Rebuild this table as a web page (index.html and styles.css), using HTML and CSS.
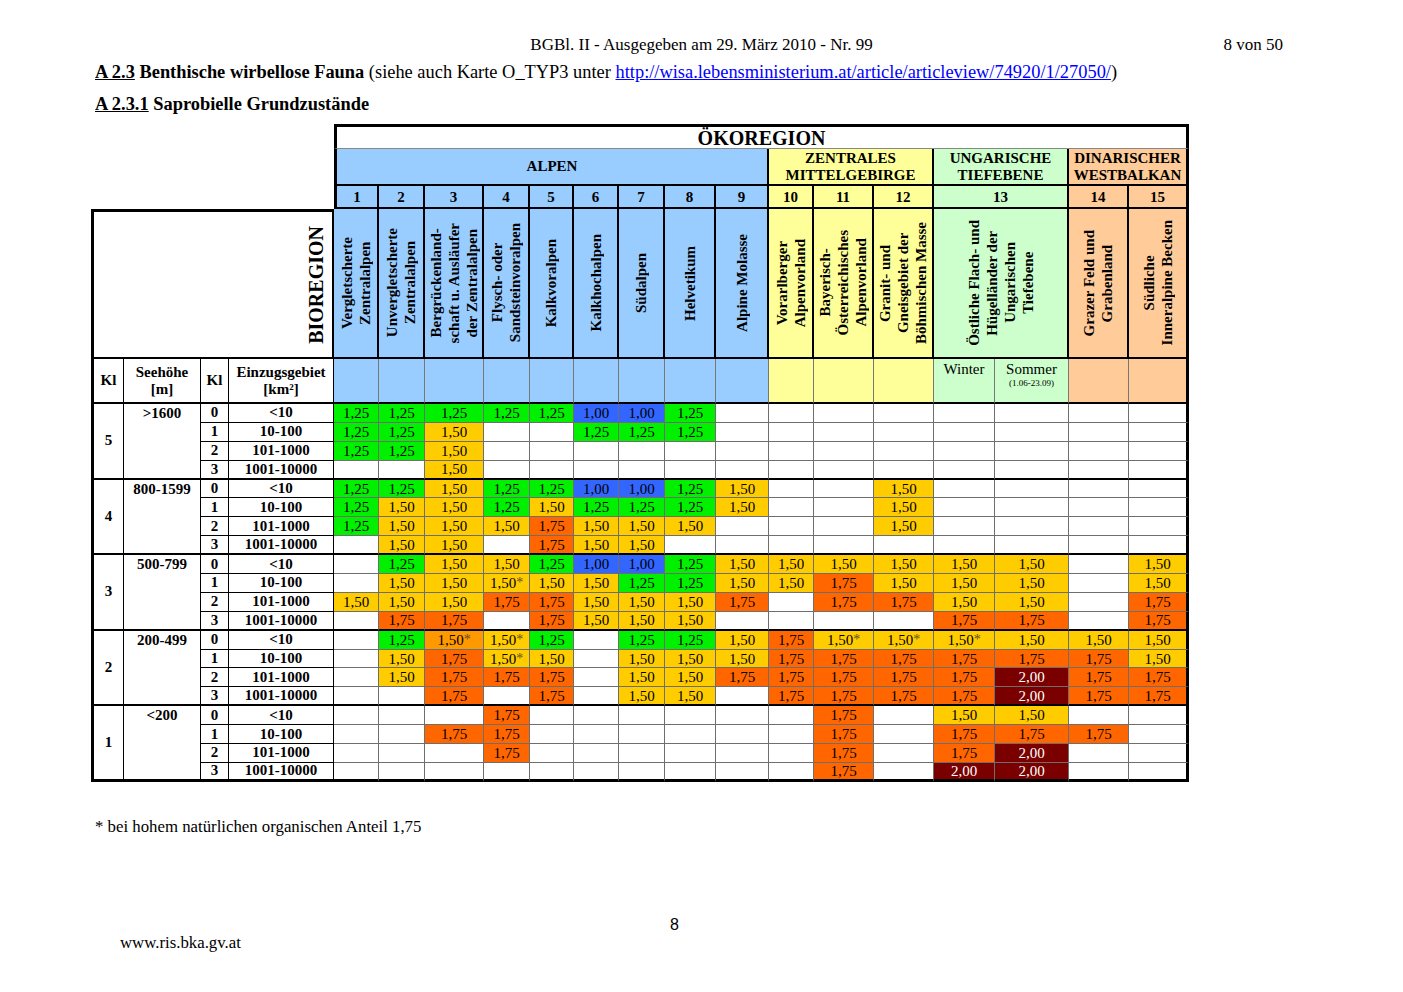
FILE: index.html
```html
<!DOCTYPE html>
<html lang="de">
<head>
<meta charset="utf-8">
<title>BGBl. II - Saprobielle Grundzustände</title>
<link rel="stylesheet" href="styles.css">
</head>
<body>
<div class="page">
  <div class="runhead"><span></span><span>BGBl. II - Ausgegeben am 29. März 2010 - Nr. 99</span><span class="pg">8 von 50</span></div>
  <div class="title"><b><span class="u">A 2.3</span> Benthische wirbellose Fauna</b> (siehe auch Karte O_TYP3 unter <a href="#">http://wisa.lebensministerium.at/article/articleview/74920/1/27050/</a>)</div>
  <div class="sub"><b><span class="u">A 2.3.1</span> Saprobielle Grundzustände</b></div>

  <div class="sheet">
    <div class="blank"></div>
    <div class="c oko">ÖKOREGION</div>

    <div class="c reg rl alp">ALPEN</div>
    <div class="c reg zen">ZENTRALES<br>MITTELGEBIRGE</div>
    <div class="c reg ung">UNGARISCHE<br>TIEFEBENE</div>
    <div class="c reg din rr">DINARISCHER<br>WESTBALKAN</div>

    <div class="c num alp rl">1</div>
    <div class="c num alp">2</div>
    <div class="c num alp">3</div>
    <div class="c num alp">4</div>
    <div class="c num alp">5</div>
    <div class="c num alp">6</div>
    <div class="c num alp">7</div>
    <div class="c num alp">8</div>
    <div class="c num alp">9</div>
    <div class="c num zen">10</div>
    <div class="c num zen">11</div>
    <div class="c num zen">12</div>
    <div class="c num ung s2">13</div>
    <div class="c num din">14</div>
    <div class="c num din rr">15</div>

    <div class="c bio"><span class="vt">BIOREGION</span></div>
    <div class="c vh alp"><span class="vt">Vergletscherte<br>Zentralalpen</span></div>
    <div class="c vh alp"><span class="vt">Unvergletscherte<br>Zentralalpen</span></div>
    <div class="c vh alp"><span class="vt">Bergrückenland-<br>schaft u. Ausläufer<br>der Zentralalpen</span></div>
    <div class="c vh alp"><span class="vt">Flysch- oder<br>Sandsteinvoralpen</span></div>
    <div class="c vh alp"><span class="vt">Kalkvoralpen</span></div>
    <div class="c vh alp"><span class="vt">Kalkhochalpen</span></div>
    <div class="c vh alp"><span class="vt">Südalpen</span></div>
    <div class="c vh alp"><span class="vt">Helvetikum</span></div>
    <div class="c vh alp"><span class="vt">Alpine Molasse</span></div>
    <div class="c vh zen"><span class="vt">Vorarlberger<br>Alpenvorland</span></div>
    <div class="c vh zen"><span class="vt">Bayerisch-<br>Österreichisches<br>Alpenvorland</span></div>
    <div class="c vh zen"><span class="vt">Granit- und<br>Gneisgebiet der<br>Böhmischen Masse</span></div>
    <div class="c vh ung s2"><span class="vt">Östliche Flach- und<br>Hügelländer der<br>Ungarischen<br>Tiefebene</span></div>
    <div class="c vh din"><span class="vt">Grazer Feld und<br>Grabenland</span></div>
    <div class="c vh din rr"><span class="vt">Südliche<br>Inneralpine Becken</span></div>

    <div class="row hrow">
      <div class="c h hl">Kl</div>
      <div class="c h">Seehöhe<br>[m]</div>
      <div class="c h">Kl</div>
      <div class="c h">Einzugsgebiet<br>[km²]</div>
      <div class="c hc alp"></div><div class="c hc alp"></div><div class="c hc alp"></div><div class="c hc alp"></div><div class="c hc alp"></div><div class="c hc alp"></div><div class="c hc alp"></div><div class="c hc alp"></div><div class="c hc alp"></div>
      <div class="c hc zen"></div><div class="c hc zen"></div><div class="c hc zen"></div>
      <div class="c hc ung season">Winter</div>
      <div class="c hc ung season">Sommer<small>(1.06-23.09)</small></div>
      <div class="c hc din"></div><div class="c hc din"></div>
    </div>

    <!-- Klasse 5 -->
    <div class="row">
      <div class="c gk">5</div><div class="c gs">&gt;1600</div>
      <div class="c k">0</div><div class="c e">&lt;10</div>
      <div class="c d g">1,25</div><div class="c d g">1,25</div><div class="c d g">1,25</div><div class="c d g">1,25</div><div class="c d g">1,25</div><div class="c d b">1,00</div><div class="c d b">1,00</div><div class="c d g">1,25</div><div class="c d"></div><div class="c d"></div><div class="c d"></div><div class="c d"></div><div class="c d"></div><div class="c d"></div><div class="c d"></div><div class="c d"></div>
    </div>
    <div class="row">
      <div class="c k">1</div><div class="c e">10-100</div>
      <div class="c d g">1,25</div><div class="c d g">1,25</div><div class="c d y">1,50</div><div class="c d"></div><div class="c d"></div><div class="c d g">1,25</div><div class="c d g">1,25</div><div class="c d g">1,25</div><div class="c d"></div><div class="c d"></div><div class="c d"></div><div class="c d"></div><div class="c d"></div><div class="c d"></div><div class="c d"></div><div class="c d"></div>
    </div>
    <div class="row">
      <div class="c k">2</div><div class="c e">101-1000</div>
      <div class="c d g">1,25</div><div class="c d g">1,25</div><div class="c d y">1,50</div><div class="c d"></div><div class="c d"></div><div class="c d"></div><div class="c d"></div><div class="c d"></div><div class="c d"></div><div class="c d"></div><div class="c d"></div><div class="c d"></div><div class="c d"></div><div class="c d"></div><div class="c d"></div><div class="c d"></div>
    </div>
    <div class="row end">
      <div class="c k">3</div><div class="c e">1001-10000</div>
      <div class="c d"></div><div class="c d"></div><div class="c d y">1,50</div><div class="c d"></div><div class="c d"></div><div class="c d"></div><div class="c d"></div><div class="c d"></div><div class="c d"></div><div class="c d"></div><div class="c d"></div><div class="c d"></div><div class="c d"></div><div class="c d"></div><div class="c d"></div><div class="c d"></div>
    </div>

    <!-- Klasse 4 -->
    <div class="row">
      <div class="c gk">4</div><div class="c gs">800-1599</div>
      <div class="c k">0</div><div class="c e">&lt;10</div>
      <div class="c d g">1,25</div><div class="c d g">1,25</div><div class="c d y">1,50</div><div class="c d g">1,25</div><div class="c d g">1,25</div><div class="c d b">1,00</div><div class="c d b">1,00</div><div class="c d g">1,25</div><div class="c d y">1,50</div><div class="c d"></div><div class="c d"></div><div class="c d y">1,50</div><div class="c d"></div><div class="c d"></div><div class="c d"></div><div class="c d"></div>
    </div>
    <div class="row">
      <div class="c k">1</div><div class="c e">10-100</div>
      <div class="c d g">1,25</div><div class="c d y">1,50</div><div class="c d y">1,50</div><div class="c d g">1,25</div><div class="c d y">1,50</div><div class="c d g">1,25</div><div class="c d g">1,25</div><div class="c d g">1,25</div><div class="c d y">1,50</div><div class="c d"></div><div class="c d"></div><div class="c d y">1,50</div><div class="c d"></div><div class="c d"></div><div class="c d"></div><div class="c d"></div>
    </div>
    <div class="row">
      <div class="c k">2</div><div class="c e">101-1000</div>
      <div class="c d g">1,25</div><div class="c d y">1,50</div><div class="c d y">1,50</div><div class="c d y">1,50</div><div class="c d o">1,75</div><div class="c d y">1,50</div><div class="c d y">1,50</div><div class="c d y">1,50</div><div class="c d"></div><div class="c d"></div><div class="c d"></div><div class="c d y">1,50</div><div class="c d"></div><div class="c d"></div><div class="c d"></div><div class="c d"></div>
    </div>
    <div class="row end">
      <div class="c k">3</div><div class="c e">1001-10000</div>
      <div class="c d"></div><div class="c d y">1,50</div><div class="c d y">1,50</div><div class="c d"></div><div class="c d o">1,75</div><div class="c d y">1,50</div><div class="c d y">1,50</div><div class="c d"></div><div class="c d"></div><div class="c d"></div><div class="c d"></div><div class="c d"></div><div class="c d"></div><div class="c d"></div><div class="c d"></div><div class="c d"></div>
    </div>

    <!-- Klasse 3 -->
    <div class="row">
      <div class="c gk">3</div><div class="c gs">500-799</div>
      <div class="c k">0</div><div class="c e">&lt;10</div>
      <div class="c d"></div><div class="c d g">1,25</div><div class="c d y">1,50</div><div class="c d y">1,50</div><div class="c d g">1,25</div><div class="c d b">1,00</div><div class="c d b">1,00</div><div class="c d g">1,25</div><div class="c d y">1,50</div><div class="c d y">1,50</div><div class="c d y">1,50</div><div class="c d y">1,50</div><div class="c d y">1,50</div><div class="c d y">1,50</div><div class="c d"></div><div class="c d y">1,50</div>
    </div>
    <div class="row">
      <div class="c k">1</div><div class="c e">10-100</div>
      <div class="c d"></div><div class="c d y">1,50</div><div class="c d y">1,50</div><div class="c d y">1,50<span class="ast">*</span></div><div class="c d y">1,50</div><div class="c d y">1,50</div><div class="c d g">1,25</div><div class="c d g">1,25</div><div class="c d y">1,50</div><div class="c d y">1,50</div><div class="c d o">1,75</div><div class="c d y">1,50</div><div class="c d y">1,50</div><div class="c d y">1,50</div><div class="c d"></div><div class="c d y">1,50</div>
    </div>
    <div class="row">
      <div class="c k">2</div><div class="c e">101-1000</div>
      <div class="c d y">1,50</div><div class="c d y">1,50</div><div class="c d y">1,50</div><div class="c d o">1,75</div><div class="c d o">1,75</div><div class="c d y">1,50</div><div class="c d y">1,50</div><div class="c d y">1,50</div><div class="c d o">1,75</div><div class="c d"></div><div class="c d o">1,75</div><div class="c d o">1,75</div><div class="c d y">1,50</div><div class="c d y">1,50</div><div class="c d"></div><div class="c d o">1,75</div>
    </div>
    <div class="row end">
      <div class="c k">3</div><div class="c e">1001-10000</div>
      <div class="c d"></div><div class="c d o">1,75</div><div class="c d o">1,75</div><div class="c d"></div><div class="c d o">1,75</div><div class="c d y">1,50</div><div class="c d y">1,50</div><div class="c d y">1,50</div><div class="c d"></div><div class="c d"></div><div class="c d"></div><div class="c d"></div><div class="c d o">1,75</div><div class="c d o">1,75</div><div class="c d"></div><div class="c d o">1,75</div>
    </div>

    <!-- Klasse 2 -->
    <div class="row">
      <div class="c gk">2</div><div class="c gs">200-499</div>
      <div class="c k">0</div><div class="c e">&lt;10</div>
      <div class="c d"></div><div class="c d g">1,25</div><div class="c d lo">1,50<span class="ast">*</span></div><div class="c d y">1,50<span class="ast">*</span></div><div class="c d g">1,25</div><div class="c d"></div><div class="c d g">1,25</div><div class="c d g">1,25</div><div class="c d y">1,50</div><div class="c d o">1,75</div><div class="c d y">1,50<span class="ast">*</span></div><div class="c d y">1,50<span class="ast">*</span></div><div class="c d y">1,50<span class="ast">*</span></div><div class="c d y">1,50</div><div class="c d y">1,50</div><div class="c d y">1,50</div>
    </div>
    <div class="row">
      <div class="c k">1</div><div class="c e">10-100</div>
      <div class="c d"></div><div class="c d y">1,50</div><div class="c d o">1,75</div><div class="c d y">1,50<span class="ast">*</span></div><div class="c d y">1,50</div><div class="c d"></div><div class="c d y">1,50</div><div class="c d y">1,50</div><div class="c d y">1,50</div><div class="c d o">1,75</div><div class="c d o">1,75</div><div class="c d o">1,75</div><div class="c d o">1,75</div><div class="c d o">1,75</div><div class="c d o">1,75</div><div class="c d y">1,50</div>
    </div>
    <div class="row">
      <div class="c k">2</div><div class="c e">101-1000</div>
      <div class="c d"></div><div class="c d y">1,50</div><div class="c d o">1,75</div><div class="c d o">1,75</div><div class="c d o">1,75</div><div class="c d"></div><div class="c d y">1,50</div><div class="c d y">1,50</div><div class="c d o">1,75</div><div class="c d o">1,75</div><div class="c d o">1,75</div><div class="c d o">1,75</div><div class="c d o">1,75</div><div class="c d r">2,00</div><div class="c d o">1,75</div><div class="c d o">1,75</div>
    </div>
    <div class="row end">
      <div class="c k">3</div><div class="c e">1001-10000</div>
      <div class="c d"></div><div class="c d"></div><div class="c d o">1,75</div><div class="c d"></div><div class="c d o">1,75</div><div class="c d"></div><div class="c d y">1,50</div><div class="c d y">1,50</div><div class="c d"></div><div class="c d o">1,75</div><div class="c d o">1,75</div><div class="c d o">1,75</div><div class="c d o">1,75</div><div class="c d r">2,00</div><div class="c d o">1,75</div><div class="c d o">1,75</div>
    </div>

    <!-- Klasse 1 -->
    <div class="row">
      <div class="c gk gf">1</div><div class="c gs gf">&lt;200</div>
      <div class="c k">0</div><div class="c e">&lt;10</div>
      <div class="c d"></div><div class="c d"></div><div class="c d"></div><div class="c d o">1,75</div><div class="c d"></div><div class="c d"></div><div class="c d"></div><div class="c d"></div><div class="c d"></div><div class="c d"></div><div class="c d o">1,75</div><div class="c d"></div><div class="c d y">1,50</div><div class="c d y">1,50</div><div class="c d"></div><div class="c d"></div>
    </div>
    <div class="row">
      <div class="c k">1</div><div class="c e">10-100</div>
      <div class="c d"></div><div class="c d"></div><div class="c d o">1,75</div><div class="c d o">1,75</div><div class="c d"></div><div class="c d"></div><div class="c d"></div><div class="c d"></div><div class="c d"></div><div class="c d"></div><div class="c d o">1,75</div><div class="c d"></div><div class="c d o">1,75</div><div class="c d o">1,75</div><div class="c d o">1,75</div><div class="c d"></div>
    </div>
    <div class="row">
      <div class="c k">2</div><div class="c e">101-1000</div>
      <div class="c d"></div><div class="c d"></div><div class="c d"></div><div class="c d o">1,75</div><div class="c d"></div><div class="c d"></div><div class="c d"></div><div class="c d"></div><div class="c d"></div><div class="c d"></div><div class="c d o">1,75</div><div class="c d"></div><div class="c d o">1,75</div><div class="c d r">2,00</div><div class="c d"></div><div class="c d"></div>
    </div>
    <div class="row final">
      <div class="c k">3</div><div class="c e">1001-10000</div>
      <div class="c d"></div><div class="c d"></div><div class="c d"></div><div class="c d"></div><div class="c d"></div><div class="c d"></div><div class="c d"></div><div class="c d"></div><div class="c d"></div><div class="c d"></div><div class="c d o">1,75</div><div class="c d"></div><div class="c d r">2,00</div><div class="c d r">2,00</div><div class="c d"></div><div class="c d"></div>
    </div>
  </div>

  <div class="foot">* bei hohem natürlichen organischen Anteil 1,75</div>
  <div class="pnum">8</div>
  <div class="url">www.ris.bka.gv.at</div>
</div>
</body>
</html>
```

FILE: styles.css
```css
* { box-sizing: border-box; }

body {
  margin: 0;
  background: #fff;
  color: #000;
  font-family: "Liberation Serif", "Times New Roman", serif;
}

.page {
  width: 1403px;
  padding-top: 36px;
}

.runhead {
  display: grid;
  grid-template-columns: 1fr auto 1fr;
  padding: 0 120px;
  font-size: 17px;
  line-height: 18px;
  height: 18px;
  white-space: nowrap;
}
.runhead .pg { justify-self: end; }

.title {
  margin: 8px 0 0 95px;
  font-size: 18.4px;
  line-height: 20px;
  white-space: nowrap;
}
.sub {
  margin: 12px 0 0 95px;
  font-size: 18.4px;
  line-height: 20px;
}
.u { text-decoration: underline; }
.title a { color: #0000ff; text-decoration: underline; }

/* ---------- table grid ---------- */
.sheet {
  margin: 10px 0 0 91px;
  width: 1098px;
  display: grid;
  grid-template-columns: 33px 77px 28px 105px 45px 46px 59px 46px 44px 45px 46px 51px 53px 45px 60px 60px 61px 74px 60px 60px;
  grid-template-rows: 25px 37px 23px 150px 45px repeat(20, 18.9px);
}
.row { display: contents; }

.c {
  display: flex;
  align-items: center;
  justify-content: center;
  text-align: center;
  border-right: 1px solid #6e6e6e;
  border-bottom: 1px solid #6e6e6e;
  background: #fff;
  overflow: hidden;
  white-space: nowrap;
}

.blank {
  grid-row: 1 / 4;
  grid-column: 1 / 5;
}

.oko {
  grid-column: span 16;
  font-weight: bold;
  font-size: 20px;
  line-height: 20px;
  border-top: 3px solid #000;
  border-left: 3px solid #000;
  border-right: 3px solid #000;
  border-bottom: 1px solid #888;
  padding-top: 1px;
}

.alp { background: #99ccff; }
.zen { background: #ffff99; }
.ung { background: #ccffcc; }
.din { background: #ffcc99; }

.reg {
  font-weight: bold;
  font-size: 15px;
  line-height: 17px;
  border-right: 2px solid #000;
  border-bottom: 2px solid #000;
}
.reg.alp { grid-column: span 9; }
.reg.zen { grid-column: span 3; }
.reg.ung { grid-column: span 2; }
.reg.din { grid-column: span 2; }

.rl { border-left: 3px solid #000; }
.rr { border-right: 3px solid #000 !important; }
.s2 { grid-column: span 2; }

.num {
  font-weight: bold;
  font-size: 15px;
  border-right: 2px solid #000;
  border-bottom: 2px solid #000;
  padding-top: 1px;
}

.bio {
  grid-column: span 4;
  border-top: 3px solid #000;
  border-left: 3px solid #000;
  border-right: 2px solid #000;
  border-bottom: 2px solid #000;
  justify-content: flex-end;
  padding-right: 4px;
}
.vh {
  border-right: 2px solid #000;
  border-bottom: 2px solid #000;
}
.vt {
  writing-mode: vertical-rl;
  transform: rotate(180deg);
  font-weight: bold;
  font-size: 15px;
  line-height: 18px;
  text-align: center;
  white-space: nowrap;
}
.bio .vt {
  font-size: 20px;
  line-height: 24px;
}

/* column header row */
.h {
  font-weight: bold;
  font-size: 15px;
  line-height: 17px;
  border-right: 1px solid #000;
  border-bottom: 2px solid #000;
}
.hl { border-left: 3px solid #000; }
.hc {
  border-right: 1px solid #777;
  border-bottom: 2px solid #000;
}
.hrow > .c:last-child { border-right: 3px solid #000; }
.season {
  flex-direction: column;
  justify-content: flex-start;
  font-size: 15px;
  line-height: 17px;
  padding-top: 2px;
}
.season small {
  font-size: 9px;
  line-height: 11px;
}

/* data */
.gk, .gs {
  grid-row: span 4;
  font-weight: bold;
  font-size: 15px;
  border-right: 1px solid #000;
  border-bottom: 2px solid #000;
}
.gk { border-left: 3px solid #000; }
.gs {
  align-items: flex-start;
  line-height: 18px;
}
.gf { border-bottom: 3px solid #000; }

.k, .e {
  font-weight: bold;
  font-size: 15px;
  border-right: 1px solid #000;
  border-bottom: 1px solid #000;
}

.d {
  font-size: 15px;
  line-height: 16px;
}
.row > .c:last-child { border-right: 3px solid #000; }
.row.end > .c { border-bottom: 2px solid #000; }
.row.final > .c { border-bottom: 3px solid #000; }

.g { background: #00f000; }
.b { background: #3366ff; }
.y { background: #ffcc00; }
.o { background: #ff6600; }
.lo { background: #ff9900; }
.r { background: #7a0000; color: #fff; }
.ast { color: #5e5028; font-size: 14px; }

/* footer */
.foot {
  margin: 35px 0 0 95px;
  font-size: 16.8px;
  line-height: 20px;
}
.pnum {
  margin-top: 79px;
  padding-left: 670px;
  font-family: "Liberation Sans", Arial, sans-serif;
  font-size: 16px;
  line-height: 18px;
}
.url {
  padding-left: 120px;
  font-size: 16.8px;
  line-height: 18px;
}
```
